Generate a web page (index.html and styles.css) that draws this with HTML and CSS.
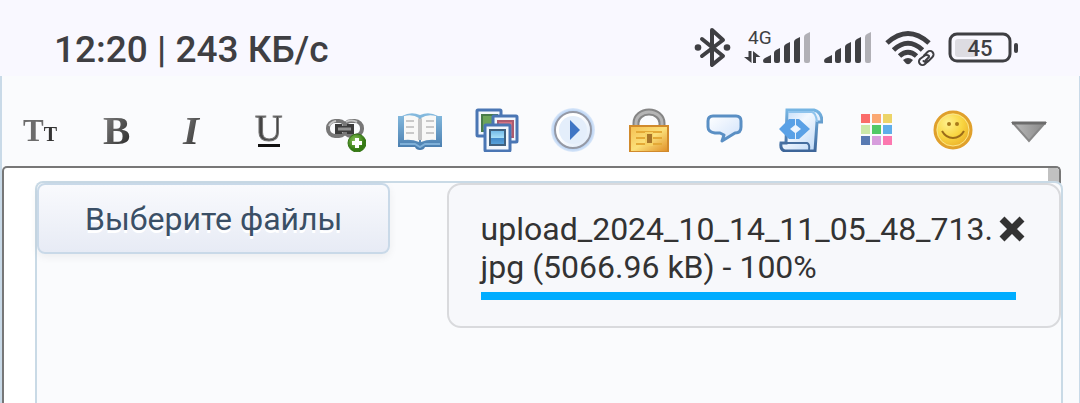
FILE: index.html
```
<!DOCTYPE html>
<html lang="ru">
<head>
    <meta charset="UTF-8">
    <meta name="viewport" content="width=device-width, initial-scale=1.0">
    <title>Загрузка файлов</title>
    <link rel="stylesheet" href="styles.css">
</head>
<body>

<header class="status-bar">
    <div class="status-text">12:20 | 243 КБ/с</div>
    <div class="status-icons">
        <!-- Bluetooth -->
        <svg width="37" height="48" viewBox="0 0 37 48">
            <path d="M8 14L29 31L18 40V5L29 15L8 31" fill="none" stroke="#3f3f43" stroke-width="4" stroke-linecap="round" stroke-linejoin="round"/>
            <circle cx="4" cy="22.500" r="3.300" fill="#3f3f43"/>
            <circle cx="33" cy="22.500" r="3.300" fill="#3f3f43"/>
        </svg>
        <!-- SIM 1 -->
        <svg width="67" height="48" viewBox="0 0 67 48" fill="#3f3f43">
            <text class="net-type" x="4" y="19">4G</text>
            <path d="M4.500 26h3v12L0 32h4.500zM9 38V26l7.500 6H12v6z"/>
            <path d="M19 36q0-2 2-3l6-3v8h-6q-2 0-2-2zM30 28q0-2 2-3l4-2v13q0 2-2 2h-2q-2 0-2-2zM40 22q0-2 2-3l4-2v19q0 2-2 2h-2q-2 0-2-2zM50 17q0-2 2-3l4-2v24q0 2-2 2h-2q-2 0-2-2z"/>
            <path d="M60 12q0-2 2-3l4-2v29q0 2-2 2h-2q-2 0-2-2z" fill="#b1b0b6"/>
        </svg>
        <!-- SIM 2 -->
        <svg width="48" height="48" viewBox="19 0 48 48" fill="#3f3f43">
            <path d="M19 36q0-2 2-3l6-3v8h-6q-2 0-2-2zM30 28q0-2 2-3l4-2v13q0 2-2 2h-2q-2 0-2-2zM40 22q0-2 2-3l4-2v19q0 2-2 2h-2q-2 0-2-2zM50 17q0-2 2-3l4-2v24q0 2-2 2h-2q-2 0-2-2z"/>
            <path d="M60 12q0-2 2-3l4-2v29q0 2-2 2h-2q-2 0-2-2z" fill="#b1b0b6"/>
        </svg>
        <!-- Wi-Fi -->
        <svg width="50" height="48" viewBox="0 0 50 48" fill="none" stroke="#3f3f43">
            <path d="M2 18Q23-1 44 18M8.500 25Q23 11.500 37.500 25M14.500 31Q23 23.500 31.500 31" stroke-width="5"/>
            <path d="M18 35q5-4 10 0l-3 3.500q-2 1.500-4 0z" fill="#3f3f43" stroke="none"/>
            <g stroke-width="2" stroke-linecap="round">
                <path d="M39 30.500l3.500-3.500a3.500 3.500 0 0 1 5 5l-4 4a3.500 3.500 0 0 1-5 0"/>
                <path d="M44 32l-3.500 3.500M44 31a3.500 3.500 0 0 0-5 0l-4 3a3.500 3.500 0 0 0 5 5l3-3" />
            </g>
        </svg>
        <!-- Батарея -->
        <svg width="70" height="48" viewBox="0 0 70 48">
            <rect x="2" y="9" width="60" height="27" rx="7" fill="none" stroke="#3f3f43" stroke-width="3"/>
            <rect x="7" y="14" width="23" height="18" rx="3" fill="#dddce2"/>
            <rect x="66" y="18" width="4" height="10" rx="2" fill="#3f3f43"/>
            <text class="battery-level" x="32" y="31" text-anchor="middle">45</text>
        </svg>
    </div>
</header>

<main class="editor">
    <div class="toolbar">
        <button type="button" class="tool" aria-label="Размер шрифта">
            <svg viewBox="0 0 44 44">
                <defs>
                    <linearGradient id="ink" x1="0" y1="0" x2="1" y2="1">
                        <stop offset="0" stop-color="#8a8a8a"/>
                        <stop offset="1" stop-color="#222"/>
                    </linearGradient>
                </defs>
                <text class="letter bold" x="5" y="33" font-size="31" fill="#6c6c6c">T<tspan font-size="20" fill="#333">T</tspan></text>
            </svg>
        </button>
        <button type="button" class="tool" aria-label="Полужирный">
            <svg viewBox="0 0 44 44"><text class="letter bold" x="9" y="36" font-size="41" fill="url(#ink)">B</text></svg>
        </button>
        <button type="button" class="tool" aria-label="Курсив">
            <svg viewBox="0 0 44 44"><text class="letter bold italic" x="13" y="36" font-size="41" fill="url(#ink)">I</text></svg>
        </button>
        <button type="button" class="tool" aria-label="Подчёркнутый">
            <svg viewBox="0 0 44 44">
                <text class="letter" x="9" y="33" font-size="38" fill="#444" stroke="#777">U</text>
                <rect x="12" y="36" width="22" height="3" fill="#111"/>
            </svg>
        </button>
        <button type="button" class="tool" aria-label="Ссылка">
            <svg viewBox="0 0 44 44">
                <defs>
                    <radialGradient id="green" cx=".4" cy=".35">
                        <stop offset="0" stop-color="#8cc45a"/>
                        <stop offset="1" stop-color="#357a14"/>
                    </radialGradient>
                </defs>
                <rect x="6" y="13" width="18" height="15" rx="7" fill="none" stroke="#777" stroke-width="4"/>
                <rect x="22" y="13" width="18" height="15" rx="7" fill="none" stroke="#777" stroke-width="4"/>
                <path d="M7 18q2-4 7-5M24 14q5-3 11 0" fill="none" stroke="#c5c5c5" stroke-width="2"/>
                <path d="M13 16h7v2h5v-2h7v10h-7v-2h-5v2h-7z" fill="#3c3c3c"/>
                <path d="M16 21h13" stroke="#929292" stroke-width="3"/>
                <circle cx="35" cy="35" r="9" fill="url(#green)" stroke="#347516"/>
                <path d="M35 30v10M30 35h10" stroke="#fff" stroke-width="4"/>
            </svg>
        </button>
        <button type="button" class="tool" aria-label="Цитата из книги">
            <svg viewBox="0 0 44 44">
                <defs>
                    <linearGradient id="cover" x1="0" y1="0" x2="0" y2="1">
                        <stop offset="0" stop-color="#86bce0"/>
                        <stop offset="1" stop-color="#467aac"/>
                    </linearGradient>
                </defs>
                <path d="M0 8h4q9-5 18-1q9-4 18 1h4v31H27q-1 3-5 3t-5-3H0z" fill="url(#cover)"/>
                <path d="M6 8q9-2 15 2v24q-7-3-15-2zM38 8q-9-2-15 2v24q7-3 15-2z" fill="#f8f8f7"/>
                <path d="M20 10v22h4V10l-2 1z" fill="#c4c4c4"/>
                <path d="M8 13h8M8 19h8M8 25h8M28 13h8M28 19h8M28 25h8" stroke="#c9c9c9" stroke-width="2"/>
                <path d="M2 36h15l5 3l5-3h15" fill="none" stroke="#7fb0d8" stroke-width="2"/>
            </svg>
        </button>
        <button type="button" class="tool" aria-label="Изображения">
            <svg viewBox="0 0 44 44">
                <defs>
                    <linearGradient id="photo" x1="0" y1="0" x2="0" y2="1">
                        <stop offset="0" stop-color="#6cb5e6"/>
                        <stop offset=".5" stop-color="#a6def8"/>
                        <stop offset=".55" stop-color="#438aca"/>
                        <stop offset="1" stop-color="#5aa5dc"/>
                    </linearGradient>
                </defs>
                <g fill="#f3f7fc" stroke="#4a76b4" stroke-width="3">
                    <rect x="2" y="2" width="24" height="26" rx="1"/>
                    <rect x="7" y="7" width="15" height="16" fill="#6da45a" stroke="#497b4b" stroke-width="2"/>
                    <rect x="18" y="8" width="24" height="26" rx="1"/>
                    <rect x="23" y="13" width="15" height="16" fill="#d47281" stroke="#ad5b70" stroke-width="2"/>
                    <rect x="10" y="17" width="25" height="26" rx="1"/>
                    <rect x="15" y="22" width="15" height="15" fill="url(#photo)" stroke="#40617f" stroke-width="2"/>
                </g>
            </svg>
        </button>
        <button type="button" class="tool" aria-label="Видео">
            <svg viewBox="0 0 44 44">
                <defs>
                    <linearGradient id="disc" x1="0" y1="0" x2="1" y2="1">
                        <stop offset=".4" stop-color="#fff"/>
                        <stop offset="1" stop-color="#d9e7f9"/>
                    </linearGradient>
                    <radialGradient id="halo">
                        <stop offset=".8" stop-color="#a9c8f0"/>
                        <stop offset="1" stop-color="#dce9fa"/>
                    </radialGradient>
                </defs>
                <circle cx="22" cy="22" r="22" fill="url(#halo)"/>
                <circle cx="22" cy="22" r="18" fill="url(#disc)" stroke="#9599a5" stroke-width="2"/>
                <circle cx="22" cy="22" r="14" fill="#e4eefb"/>
                <path d="M19 12l10 10l-10 10z" fill="#3f75c4"/>
            </svg>
        </button>
        <button type="button" class="tool" aria-label="Скрытый текст">
            <svg viewBox="0 0 44 44">
                <defs>
                    <linearGradient id="gold" x1="0" y1="0" x2="1" y2="1">
                        <stop offset="0" stop-color="#f5bf50"/>
                        <stop offset=".5" stop-color="#fbe07a"/>
                        <stop offset="1" stop-color="#df8d25"/>
                    </linearGradient>
                </defs>
                <path d="M9 18v-3a13 11 0 0 1 26 0v3" fill="none" stroke="#858585" stroke-width="7"/>
                <path d="M9 18v-3a13 11 0 0 1 26 0v3" fill="none" stroke="#b5b5b5" stroke-width="3"/>
                <rect x="3" y="18" width="38" height="26" fill="url(#gold)" stroke="#d18a2c" stroke-width="2"/>
                <path d="M9 24h26M9 30h26M9 36h26" stroke="#e4a936" stroke-width="2"/>
                <path d="M18 24h8v14h-8z" fill="#f6d164"/>
                <path d="M20 26h5v9h-5z" fill="#a8752a"/>
            </svg>
        </button>
        <button type="button" class="tool" aria-label="Цитата">
            <svg viewBox="0 0 44 44">
                <defs>
                    <linearGradient id="bubble" x1="0" y1="0" x2="1" y2="1">
                        <stop offset="0" stop-color="#fff"/>
                        <stop offset="1" stop-color="#cfe1fa"/>
                    </linearGradient>
                </defs>
                <path d="M10 8h23q5 0 5 5v6q0 6-6 6l-13 8l2-6l-4-2h-5q-7-1-7-6v-6q0-5 5-5z" fill="url(#bubble)" stroke="#5a8fc4" stroke-width="3" stroke-linejoin="round"/>
            </svg>
        </button>
        <button type="button" class="tool" aria-label="Код">
            <svg viewBox="0 0 44 44">
                <defs>
                    <linearGradient id="paper" x1="0" y1="0" x2="1" y2="1">
                        <stop offset="0" stop-color="#b9d7f8"/>
                        <stop offset=".4" stop-color="#f2f8ff"/>
                        <stop offset="1" stop-color="#b8d5f5"/>
                    </linearGradient>
                    <linearGradient id="edge" x1="0" y1="0" x2="0" y2="1">
                        <stop offset="0" stop-color="#76b5e3"/>
                        <stop offset="1" stop-color="#3d6599"/>
                    </linearGradient>
                </defs>
                <path d="M8 2h27q8 2 8 12h-5l-2 29H6q-5-1-4-8h5z" fill="url(#paper)" stroke="url(#edge)" stroke-width="3"/>
                <path d="M9 4h24q4 1 5 10" fill="none" stroke="#8fc4ed" stroke-width="2"/>
                <path d="M2 35h26q3 1 2 7" fill="none" stroke="#456e9f" stroke-width="2"/>
                <path d="M10 11h6v6l-5 4l5 4v6h-6L0 21zM20 11h-3v6l5 4l-5 4v6h3l11-10z" fill="#5aa1e6"/>
            </svg>
        </button>
        <button type="button" class="tool" aria-label="Цвет">
            <svg viewBox="0 0 44 44">
                <rect x="6" y="6" width="9" height="9" fill="#fa6c6a"/>
                <rect x="17" y="6" width="9" height="9" fill="#fba873"/>
                <rect x="28" y="6" width="9" height="9" fill="#ecd468"/>
                <rect x="6" y="17" width="9" height="9" fill="#cbe8a9"/>
                <rect x="17" y="17" width="9" height="9" fill="#51c967"/>
                <rect x="28" y="17" width="9" height="9" fill="#5faeea"/>
                <rect x="6" y="28" width="9" height="9" fill="#587ab2"/>
                <rect x="17" y="28" width="9" height="9" fill="#d79ddd"/>
                <rect x="28" y="28" width="9" height="9" fill="#fc78b0"/>
            </svg>
        </button>
        <button type="button" class="tool" aria-label="Смайлы">
            <svg viewBox="0 0 44 44">
                <defs>
                    <radialGradient id="smile" cx=".35" cy=".3" r=".8">
                        <stop offset="0" stop-color="#fff08c"/>
                        <stop offset=".5" stop-color="#f9d642"/>
                        <stop offset="1" stop-color="#e9a822"/>
                    </radialGradient>
                </defs>
                <circle cx="22" cy="22" r="18" fill="url(#smile)" stroke="#e0a02c" stroke-width="3"/>
                <circle cx="22" cy="22" r="16" fill="none" stroke="#fbe58a" stroke-width="1"/>
                <circle cx="18" cy="16" r="2" fill="#a87a1c"/>
                <circle cx="26" cy="16" r="2" fill="#a87a1c"/>
                <path d="M11 23q4 7 11 7t11-7" fill="none" stroke="#9c6d19" stroke-width="2"/>
            </svg>
        </button>
        <button type="button" class="tool" aria-label="Ещё">
            <svg viewBox="0 0 44 44">
                <defs>
                    <linearGradient id="arrow" x1="0" y1="0" x2="1" y2="0">
                        <stop offset="0" stop-color="#bbb"/>
                        <stop offset="1" stop-color="#888"/>
                    </linearGradient>
                </defs>
                <path d="M6 15h32L22 33z" fill="url(#arrow)" stroke="#888" stroke-width="2"/>
                <path d="M5 15h34" stroke="#6c6c6c" stroke-width="3"/>
            </svg>
        </button>
    </div>

    <div class="editor-body">
        <textarea class="message" aria-label="Сообщение"></textarea>
        <span class="scroll-thumb"></span>

        <section class="uploader">
            <button type="button" class="choose-btn">Выберите файлы</button>
            <div class="file-card">
                <div class="file-name">upload_2024_10_14_11_05_48_713.<wbr>jpg (5066.96 kB) - 100%</div>
                <div class="progress"></div>
                <button type="button" class="remove-btn" aria-label="Удалить">
                    <svg width="26" height="26" viewBox="0 0 26 26"><path d="M3 3l20 20M23 3L3 23" stroke="#333" stroke-width="7"/></svg>
                </button>
            </div>
        </section>
    </div>
</main>

</body>
</html>
```
FILE: styles.css
```
* {
    box-sizing: border-box;
}

body {
    display: flex;
    flex-direction: column;
    min-height: 100vh;
    margin: 0;
    background-color: #f9f8ff;
    font-family: Roboto, "Liberation Sans", sans-serif;
}

button {
    font-family: inherit;
    cursor: pointer;
}

svg {
    display: block;
}

/* Строка состояния телефона */
.status-bar {
    display: flex;
    justify-content: space-between;
    align-items: center;
    padding: 22px 62px 0 54px;
    height: 76px;
    color: #3f3f43;
}

.status-text {
    font-size: 37px;
    font-weight: 500;
}

.status-icons {
    display: flex;
    gap: 13px;
}

.net-type {
    font-size: 19px;
}

.battery-level {
    font-size: 22px;
    font-weight: 500;
    fill: #3f3f43;
}

/* Редактор */
.editor {
    flex: 1;
    display: flex;
    flex-direction: column;
    background-color: #fafbfd;
    border-left: 2px solid #c9dae8;
    border-right: 1px solid #c9dae8;
}

.toolbar {
    display: flex;
    padding: 32px 12px 14px 0;
}

.tool {
    flex: 1;
    display: flex;
    justify-content: center;
    padding: 0;
    border: none;
    background: none;
}

/* Мягкие края, как у растровых значков */
.tool svg {
    width: 44px;
    height: 44px;
    filter: blur(0.7px);
}

.letter {
    font-family: "Liberation Serif", serif;
}

.bold {
    font-weight: bold;
}

.italic {
    font-style: italic;
}

.editor-body {
    flex: 1;
    display: flex;
    position: relative;
    padding-right: 18px;
}

.message {
    flex: 1;
    border: 2px solid #777;
    border-bottom: none;
    border-radius: 5px 5px 0 0;
    background-color: #fff;
    resize: none;
    outline: none;
}

.scroll-thumb {
    position: absolute;
    top: 2px;
    right: 20px;
    width: 11px;
    height: 60px;
    background-color: #c1c1c1;
    border-top-right-radius: 3px;
}

/* Панель загрузки поверх поля ввода */
.uploader {
    position: absolute;
    top: 15px;
    right: 16px;
    bottom: 0;
    left: 33px;
    display: flex;
    justify-content: space-between;
    align-items: flex-start;
    border: 2px solid #c9dae6;
    border-bottom: none;
    border-radius: 8px 8px 0 0;
    background-color: #fafbfd;
}

.choose-btn {
    height: 71px;
    padding: 0 46px;
    border: 2px solid #c9d9e8;
    border-radius: 8px;
    background: linear-gradient(#f9fafd, #e7ebf5);
    box-shadow: 0 3px 8px rgba(0, 0, 0, 0.06);
    color: #3a4f66;
    font-size: 32px;
    text-shadow: 0 3px 0 #fff;
}

.file-card {
    position: relative;
    width: 60%;
    padding: 25px 43px 26px 32px;
    border: 2px solid #d9dadd;
    border-radius: 14px;
    background-color: #f7f8fb;
}

.file-name {
    color: #333;
    font-size: 32px;
    line-height: 38px;
}

.progress {
    height: 8px;
    margin-top: 6px;
    background-color: #00adff;
}

.remove-btn {
    position: absolute;
    top: 31px;
    right: 34px;
    padding: 0;
    border: none;
    background: none;
}
```
